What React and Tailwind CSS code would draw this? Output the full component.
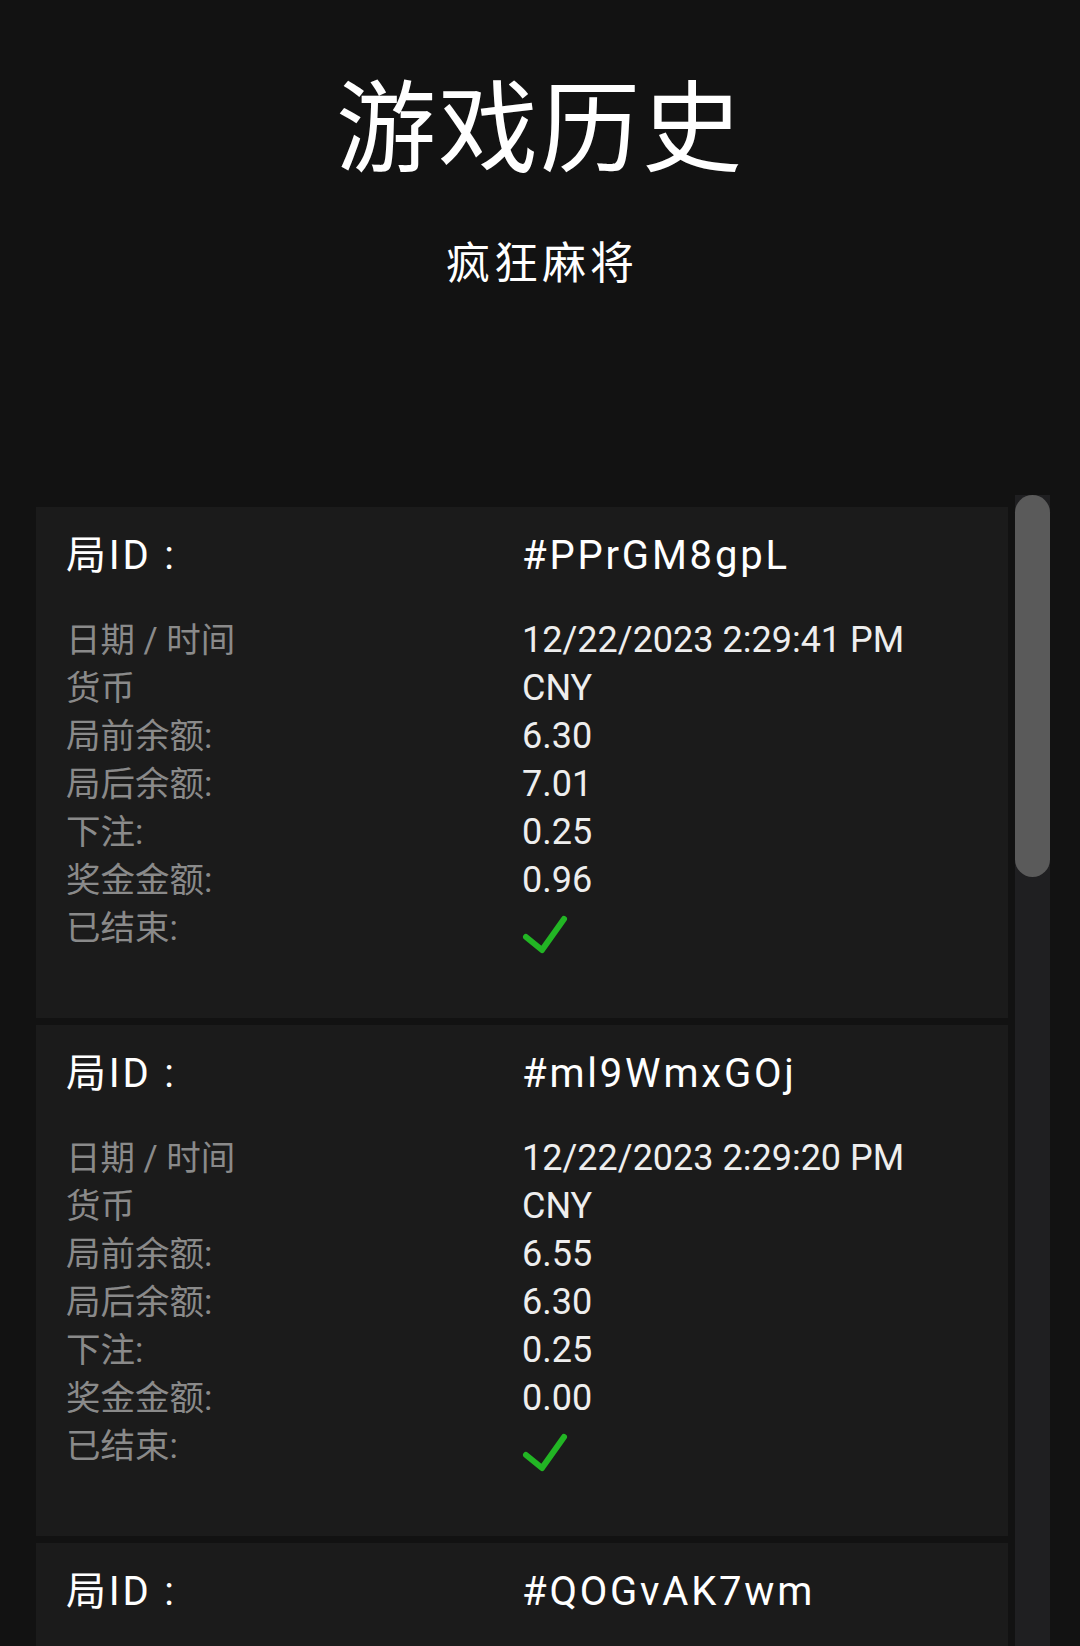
import React from 'react';

const rounds = [
  {
    id: '#PPrGM8gpL',
    time: '12/22/2023 2:29:41 PM',
    currency: 'CNY',
    before: '6.30',
    after: '7.01',
    bet: '0.25',
    win: '0.96',
  },
  {
    id: '#ml9WmxGOj',
    time: '12/22/2023 2:29:20 PM',
    currency: 'CNY',
    before: '6.55',
    after: '6.30',
    bet: '0.25',
    win: '0.00',
  },
  {
    id: '#QOGvAK7wm',
    time: '12/22/2023 2:28:58 PM',
    currency: 'CNY',
    before: '6.80',
    after: '6.55',
    bet: '0.25',
    win: '0.00',
  },
];

function Check() {
  return (
    <svg width="46" height="40" viewBox="0 0 46 40" className="mt-[10px]">
      <path
        d="M4 23 L20 36 L42 5"
        fill="none"
        stroke="#22b524"
        strokeWidth="6"
        strokeLinecap="round"
        strokeLinejoin="round"
      />
    </svg>
  );
}

function Row({ label, children }) {
  return (
    <div className="grid grid-cols-2 leading-[48px] h-[48px]">
      <span className="text-[#8a8a8a] text-[34.5px]">{label}</span>
      <span className="text-[#eeeeee] text-[36px]">{children}</span>
    </div>
  );
}

function RoundCard({ r }) {
  return (
    <div className="bg-[#1b1b1b] h-[511px] shrink-0 px-[30px] pt-[25px]">
      <div className="grid grid-cols-2 leading-[48px] text-[40px] text-white tracking-[2.8px]">
        <span>局ID :</span>
        <span>{r.id}</span>
      </div>
      <div className="mt-[36px]">
        <Row label="日期 / 时间">{r.time}</Row>
        <Row label="货币">{r.currency}</Row>
        <Row label="局前余额:">{r.before}</Row>
        <Row label="局后余额:">{r.after}</Row>
        <Row label="下注:">{r.bet}</Row>
        <Row label="奖金金额:">{r.win}</Row>
        <div className="grid grid-cols-2 h-[48px]">
          <span className="text-[#8a8a8a] text-[34.5px] leading-[48px]">已结束:</span>
          <span>
            <Check />
          </span>
        </div>
      </div>
    </div>
  );
}

export default function App() {
  return (
    <div
      className="w-[1080px] h-[1646px] bg-[#121212] overflow-hidden flex flex-col"
      style={{ fontFamily: 'Roboto, "Noto Sans CJK SC", sans-serif' }}
    >
      {/* Header */}
      <div className="pt-[61px] text-center text-white" style={{ fontFamily: '"Noto Sans CJK SC", sans-serif' }}>
        <h1 className="text-[100px] leading-[120px] tracking-[2px]">游戏历史</h1>
        <p className="mt-[55px] text-[44px] leading-[48px] tracking-[4px] pl-[4px]">疯狂麻将</p>
      </div>

      {/* History list + scrollbar */}
      <div className="mt-[211px] flex-1 flex pl-[36px] pr-[30px] min-h-0">
        <div className="w-[972px] pt-[12px] flex flex-col gap-[7px] overflow-hidden">
          {rounds.map((r) => (
            <RoundCard key={r.id} r={r} />
          ))}
        </div>
        <div className="ml-[7px] w-[35px] bg-[#1f1f21]">
          <div className="h-[382px] rounded-full bg-[#5a5a5a]" />
        </div>
      </div>
    </div>
  );
}
